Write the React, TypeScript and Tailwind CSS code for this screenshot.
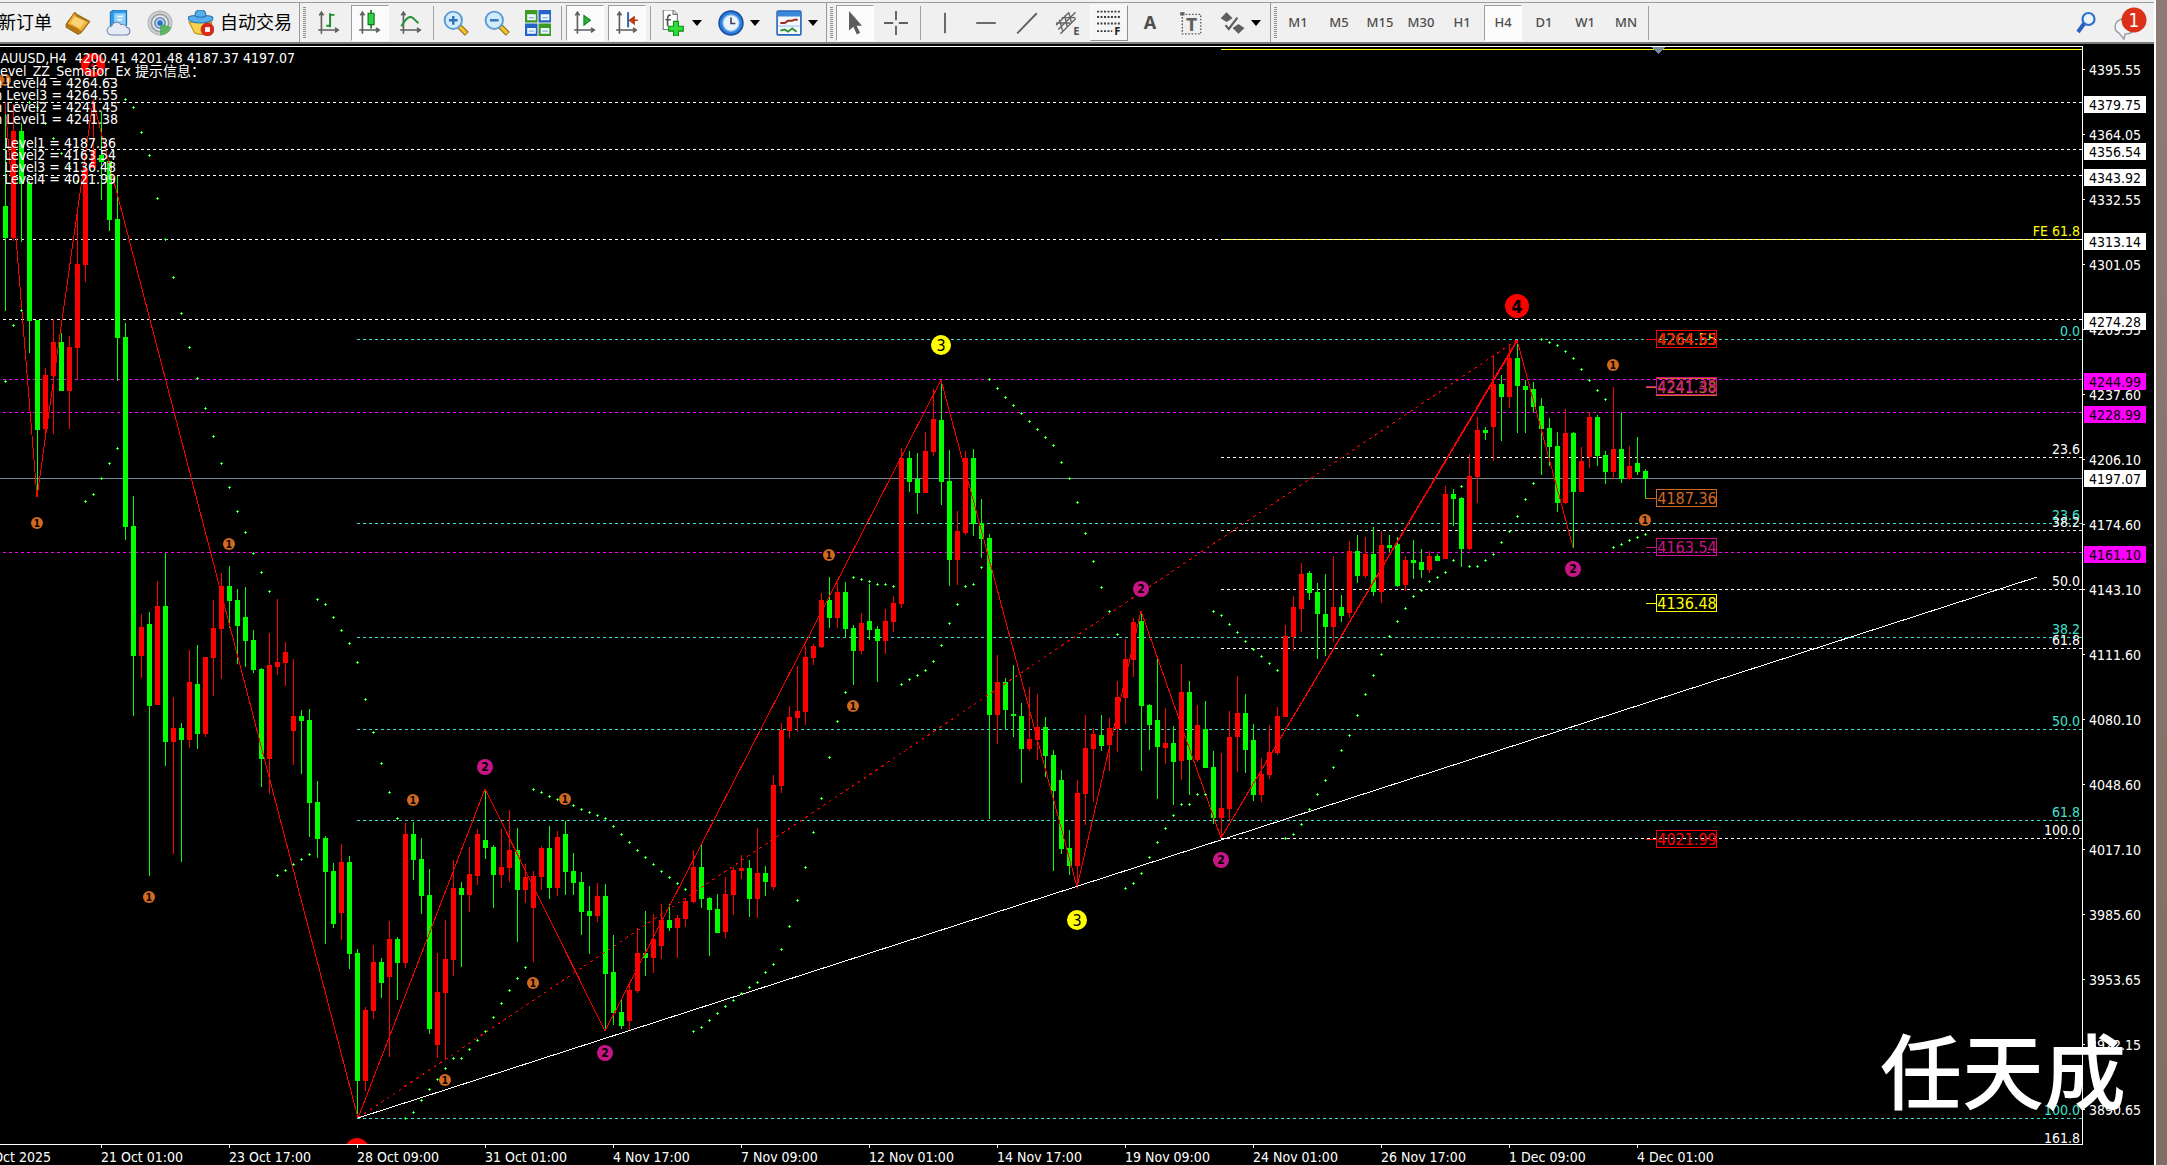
import { type ReactNode } from "react";

/* ------------------------------------------------------------------ */
/* Chart data                                                          */
/* ------------------------------------------------------------------ */

type Row = [number, number, number, number];

// Bars are stored in strips. Each strip has the index of its first bar, the
// window offset of its zero and the number of units per pixel. A row is
// [high, body top, body bottom, low]; "colors" has one letter for each row.
type Strip = { first: number; top: number; unit: number; colors: string; rows: Row[] };

const STRIPS: Strip[] = [
  {
    first: 0, top: 40, unit: 2.8, colors: "grgggrrgrrrrggggg",
    rows: [
      [190, 465, 554, 759], [180, 255, 554, 563], [232, 255, 403, 566], [395, 401, 787, 876],
      [783, 783, 1092, 1274], [917, 938, 1089, 1120], [782, 846, 941, 1104], [820, 846, 983, 983],
      [828, 860, 983, 1089], [475, 627, 862, 950], [357, 357, 630, 678], [165, 307, 357, 357],
      [200, 322, 342, 447], [338, 338, 504, 535], [380, 501, 834, 955], [792, 832, 1364, 1400],
      [1277, 1361, 1725, 1892],
    ],
  },
  {
    first: 17, top: 560, unit: 2.592, colors: "rgrgrgrgrrrgggggrrrrgggggrg",
    rows: [
      [140, 174, 249, 306], [135, 166, 378, 819], [54, 119, 376, 376], [-18, 119, 472, 534],
      [355, 435, 472, 762], [422, 435, 467, 783], [233, 316, 467, 487], [220, 321, 451, 490],
      [251, 251, 451, 459], [104, 176, 254, 352], [34, 67, 179, 308], [16, 67, 106, 176],
      [75, 104, 171, 270], [70, 148, 210, 277], [181, 207, 285, 293], [280, 282, 516, 588],
      [189, 272, 516, 606], [101, 264, 277, 298], [213, 238, 267, 327], [257, 404, 443, 531],
      [389, 404, 417, 555], [386, 415, 630, 718], [573, 627, 723, 772], [715, 721, 809, 995],
      [785, 806, 943, 954], [736, 783, 915, 985], [767, 783, 1021, 1060],
    ],
  },
  {
    first: 44, top: 700, unit: 3, colors: "grrgrgrgggrrrgrrggrrgrrrgrggggrgggrrgrrgrrrgggrrrgrgr",
    rows: [
      [747, 759, 1143, 1253], [921, 930, 1143, 1173], [735, 786, 933, 957], [774, 786, 849, 894],
      [663, 717, 831, 1071], [711, 717, 789, 900], [369, 402, 789, 804], [366, 402, 480, 540],
      [414, 477, 588, 642], [507, 585, 987, 1002], [759, 876, 1035, 1074], [660, 777, 879, 1077],
      [480, 564, 780, 828], [546, 564, 585, 801], [441, 522, 585, 636], [387, 402, 528, 555],
      [268, 420, 444, 477], [435, 441, 525, 624], [387, 501, 525, 564], [330, 450, 504, 546],
      [384, 450, 570, 726], [492, 531, 570, 609], [513, 528, 624, 786], [438, 444, 531, 570],
      [378, 444, 564, 597], [393, 411, 564, 588], [363, 402, 516, 585], [459, 513, 549, 585],
      [516, 546, 636, 705], [558, 633, 648, 762], [549, 588, 648, 666], [552, 588, 822, 993],
      [705, 816, 939, 975], [897, 936, 978, 987], [855, 870, 963, 990], [684, 759, 873, 879],
      [633, 759, 774, 828], [642, 717, 774, 819], [612, 660, 738, 777], [612, 660, 684, 693],
      [645, 654, 684, 774], [597, 603, 657, 681], [450, 501, 606, 609], [435, 501, 597, 624],
      [591, 594, 630, 768], [582, 627, 699, 699], [531, 582, 696, 714], [501, 510, 585, 645],
      [465, 504, 513, 537], [480, 504, 597, 651], [384, 519, 597, 654], [498, 519, 546, 588],
      [225, 255, 561, 570],
    ],
  },
  {
    first: 97, top: 330, unit: 2.6133, colors: "rrrrrrgrggrggrrrggrrggrrggg",
    rows: [
      [1027, 1045, 1192, 1210], [982, 1011, 1048, 1066], [878, 996, 1014, 1051], [826, 855, 998, 1032],
      [821, 826, 857, 876], [687, 706, 828, 831], [645, 706, 753, 779], [661, 685, 753, 779],
      [659, 685, 781, 803], [771, 779, 839, 928], [740, 766, 839, 847], [664, 760, 784, 810],
      [774, 781, 813, 920], [729, 760, 813, 847], [695, 713, 763, 789], [308, 335, 716, 727],
      [316, 335, 397, 423], [321, 389, 426, 481], [267, 316, 426, 426], [153, 233, 319, 329],
      [131, 235, 397, 457], [314, 395, 601, 669], [473, 525, 601, 666], [316, 335, 531, 536],
      [311, 335, 507, 538], [442, 505, 546, 596], [533, 544, 1006, 1278],
    ],
  },
  {
    first: 124, top: 360, unit: 2.6133, colors: "rgggrrggggrrrgrrrrgggrgrgrggrrrgg",
    rows: [
      [771, 841, 928, 1004], [831, 841, 915, 965], [797, 925, 930, 985], [896, 930, 1017, 1105],
      [855, 990, 1017, 1022], [873, 959, 993, 1045], [933, 959, 1035, 1090], [1019, 1032, 1126, 1335],
      [1071, 1098, 1278, 1291], [1228, 1275, 1322, 1346], [1098, 1132, 1322, 1382], [928, 1014, 1134, 1215],
      [962, 977, 1017, 1155], [928, 980, 1009, 1022], [936, 962, 1006, 1074], [839, 881, 964, 1024],
      [729, 781, 883, 951], [674, 685, 784, 828], [657, 682, 904, 1074], [899, 902, 954, 1019],
      [779, 941, 1011, 1147], [909, 1001, 1014, 1056], [956, 1001, 1051, 1163], [794, 868, 1048, 1098],
      [839, 868, 1045, 1137], [902, 954, 1045, 1050], [891, 964, 1066, 1066], [1022, 1064, 1197, 1213],
      [1027, 1171, 1197, 1250], [917, 985, 1173, 1202], [826, 923, 985, 1077], [873, 923, 1019, 1079],
      [951, 993, 1137, 1152],
    ],
  },
  {
    first: 157, top: 280, unit: 2.6133, colors: "rrrrrrgggrgrgrgrggrggrgrggrrgrgrggggggrgrrggrgrgg",
    rows: [
      [1249, 1291, 1346, 1364], [1163, 1233, 1294, 1304], [1116, 1139, 1236, 1241], [902, 930, 1142, 1142],
      [826, 855, 934, 970], [740, 768, 860, 920], [760, 766, 818, 836], [792, 815, 873, 990],
      [768, 873, 907, 983], [721, 855, 907, 946], [823, 855, 878, 894], [682, 708, 870, 883],
      [666, 708, 774, 792], [672, 716, 774, 779], [645, 716, 815, 826], [656, 693, 815, 844],
      [666, 693, 700, 711], [672, 690, 800, 802], [721, 732, 797, 813], [679, 732, 740, 781],
      [703, 737, 758, 779], [708, 721, 758, 766], [716, 721, 734, 734], [538, 559, 729, 729],
      [546, 559, 572, 643], [567, 570, 703, 750], [455, 512, 703, 706], [358, 392, 515, 583],
      [384, 392, 400, 418], [196, 272, 384, 473], [248, 272, 306, 421], [168, 204, 306, 335],
      [157, 204, 277, 400], [261, 277, 287, 400], [267, 285, 332, 345], [308, 329, 389, 510],
      [361, 387, 436, 486], [397, 434, 583, 606], [337, 400, 583, 585], [397, 400, 554, 700],
      [436, 473, 554, 554], [345, 358, 463, 491], [353, 358, 460, 486], [447, 457, 502, 533],
      [280, 442, 502, 520], [345, 442, 520, 531], [434, 486, 520, 523], [410, 478, 502, 510],
      [494, 499, 520, 572],
    ],
  },
];

// Parabolic SAR values, stored in strips in the same way.
const SAR: { first: number; top: number; unit: number; values: number[] }[] = [
  {
    first: 0, top: 40, unit: 2.8,
    values: [956, 799, 757, 176, 190, 234, 275, 317, 355, 395, 1292, 1272, 1228, 1186, 1143, 167, 189, 259, 324,
      443, 558, 664, 765, 861, 947, 1031, 1110, 1185, 1253, 1320, 1379, 1438, 1491, 1544],
  },
  {
    first: 34, top: 560, unit: 2.592,
    values: [818, 804, 789, 776, 763, 102, 115, 149, 182, 216, 265, 361],
  },
  {
    first: 46, top: 700, unit: 3,
    values: [97, 190, 277, 355, 1255, 1237, 1201, 1168, 1138, 1105, 1075, 1075, 1048, 1021, 994, 952, 910, 871,
      835, 802, 268, 277, 289, 298, 307, 316, 328, 337, 346, 355, 379, 403, 427, 451, 472, 493, 514, 532, 550,
      568, 994, 982, 961, 940, 919, 901, 880, 862, 847, 817, 793, 747],
  },
  {
    first: 98, top: 330, unit: 2.6133,
    values: [1559, 1491, 1404, 1313, 1224, 1117, 1023, 947, 646, 651, 657, 664, 664, 670, 926, 913, 902, 889, 866,
      824, 767, 717, 670, 664, 620, 129, 153, 176, 197, 218, 239, 260, 281, 302],
  },
  {
    first: 132, top: 360, unit: 2.6133,
    values: [268, 310, 372, 453, 526, 594, 657, 717, 1380, 1367, 1341, 1300, 1261, 1224, 1190, 1161, 1161, 1135,
      1135, 657, 667, 691, 711, 735, 756, 774, 793, 811],
  },
  {
    first: 160, top: 280, unit: 2.6133,
    values: [1459, 1448, 1422, 1383, 1344, 1308, 1274, 1229, 1190, 1137, 1083, 1033, 978, 932, 892, 858, 827, 811,
      787, 777, 764, 733, 540, 748, 748, 733, 717, 686, 657, 618, 573, 532, 155, 163, 171, 187, 205, 234, 263,
      288, 312, 698, 691, 681, 673, 665],
  },
];

const barX = (index: number) => 5 + 8 * index;

const candles = STRIPS.flatMap(({ first, top, unit, colors, rows }) =>
  rows.map((row, i) => {
    const [high, open, close, low] = row.map((v) => Math.round(top + v / unit));
    return { x: barX(first + i), high, open, close, low, fill: colors[i] === "r" ? "#ff0000" : "#00ff00" };
  }),
);

const sarDots = SAR.flatMap(({ first, top, unit, values }) =>
  values.map((v, i) => ({ x: barX(first + i), y: Math.floor(top + v / unit) })),
);

const WHITE = "#ffffff";
const TEAL = "#40e0d0";
const MAGENTA = "#ff00ff";

const LEVELS: { y: number; x: number; color: string; label?: string }[] = [
  { y: 102, x: 3, color: WHITE },
  { y: 149, x: 3, color: WHITE },
  { y: 175, x: 3, color: WHITE },
  { y: 239, x: 3, color: WHITE },
  { y: 319, x: 3, color: WHITE },
  { y: 339, x: 357, color: TEAL, label: "0.0" },
  { y: 379, x: 3, color: MAGENTA },
  { y: 412, x: 3, color: MAGENTA },
  { y: 457, x: 1221, color: WHITE, label: "23.6" },
  { y: 523, x: 357, color: TEAL, label: "23.6" },
  { y: 530, x: 1221, color: WHITE, label: "38.2" },
  { y: 552, x: 3, color: MAGENTA },
  { y: 589, x: 1221, color: WHITE, label: "50.0" },
  { y: 637, x: 357, color: TEAL, label: "38.2" },
  { y: 648, x: 1221, color: WHITE, label: "61.8" },
  { y: 729, x: 357, color: TEAL, label: "50.0" },
  { y: 820, x: 357, color: TEAL, label: "61.8" },
  { y: 838, x: 1221, color: WHITE, label: "100.0" },
  { y: 1118, x: 357, color: TEAL, label: "100.0" },
  { y: 1146, x: 1221, color: WHITE, label: "161.8" },
];

const MARKERS: { n: 1 | 2 | 3 | 4; x: number; y: number }[] = [
  { n: 1, x: 5, y: 80 }, { n: 1, x: 37, y: 523 }, { n: 1, x: 229, y: 544 }, { n: 1, x: 149, y: 897 },
  { n: 1, x: 413, y: 800 }, { n: 1, x: 565, y: 799 }, { n: 1, x: 533, y: 983 }, { n: 1, x: 445, y: 1080 },
  { n: 1, x: 829, y: 555 }, { n: 1, x: 853, y: 706 }, { n: 1, x: 1613, y: 365 }, { n: 1, x: 1645, y: 520 },
  { n: 2, x: 485, y: 767 }, { n: 2, x: 605, y: 1053 }, { n: 2, x: 1141, y: 589 }, { n: 2, x: 1221, y: 860 },
  { n: 2, x: 1573, y: 569 }, { n: 3, x: 941, y: 345 }, { n: 3, x: 1077, y: 920 }, { n: 4, x: 93, y: 65 },
  { n: 4, x: 357, y: 1150 }, { n: 4, x: 1517, y: 306 },
];

const MARKER_STYLE = {
  1: { r: 6, fill: "#d2691e", size: 10, weight: 700 },
  2: { r: 8, fill: "#c71585", size: 12, weight: 700 },
  3: { r: 10, fill: "#ffff00", size: 16, weight: 400 },
  4: { r: 12, fill: "#ff0000", size: 18, weight: 700 },
};

const PRICE_BOXES: { y: number; color: string; text: string }[] = [
  { y: 339, color: "#ffff00", text: "4264.55" },
  { y: 339, color: "#ff0000", text: "4264.63" },
  { y: 387, color: "#d2691e", text: "4241.38" },
  { y: 386, color: "#c71585", text: "4241.45" },
  { y: 498, color: "#d2691e", text: "4187.36" },
  { y: 547, color: "#c71585", text: "4163.54" },
  { y: 603, color: "#ffff00", text: "4136.48" },
  { y: 839, color: "#ff0000", text: "4021.99" },
];

const INFO_LINES: { y: number; end: number; text: string }[] = [
  { y: 63, end: 295, text: "XAUUSD,H4  4200.41 4201.48 4187.37 4197.07" },
  { y: 76, end: 205, text: "3_Level_ZZ_Semafor_Ex 提示信息：" },
  { y: 88, end: 118, text: "High Level4 = 4264.63" },
  { y: 100, end: 118, text: "High Level3 = 4264.55" },
  { y: 112, end: 118, text: "High Level2 = 4241.45" },
  { y: 124, end: 118, text: "High Level1 = 4241.38" },
  { y: 148, end: 116, text: "Low Level1 = 4187.36" },
  { y: 160, end: 116, text: "Low Level2 = 4163.54" },
  { y: 172, end: 116, text: "Low Level3 = 4136.48" },
  { y: 184, end: 116, text: "Low Level4 = 4021.99" },
];

const ZIGZAG = "5,102 37,497 93,101 358,1118 485,789 605,1031 941,380 1077,887 1141,611 1221,838 1517,340 1573,547";

const AXIS_PRICES = [
  "4395.55", "4364.05", "4332.55", "4301.05", "4269.55", "4237.60", "4206.10", "4174.60", "4143.10",
  "4111.60", "4080.10", "4048.60", "4017.10", "3985.60", "3953.65", "3922.15", "3890.65",
];

const PRICE_TAGS: { top: string; tone: string; text: string }[] = [
  { top: "top-[50px]", tone: "bg-white", text: "4379.75" },
  { top: "top-[97px]", tone: "bg-white", text: "4356.54" },
  { top: "top-[123px]", tone: "bg-white", text: "4343.92" },
  { top: "top-[187px]", tone: "bg-white", text: "4313.14" },
  { top: "top-[267px]", tone: "bg-white", text: "4274.28" },
  { top: "top-[327px]", tone: "bg-[#ff00ff]", text: "4244.99" },
  { top: "top-[360px]", tone: "bg-[#ff00ff]", text: "4228.99" },
  { top: "top-[424px]", tone: "bg-white", text: "4197.07" },
  { top: "top-[500px]", tone: "bg-[#ff00ff]", text: "4161.10" },
];

const TIMES = [
  "21 Oct 01:00", "23 Oct 17:00", "28 Oct 09:00", "31 Oct 01:00", "4 Nov 17:00", "7 Nov 09:00", "12 Nov 01:00",
  "14 Nov 17:00", "19 Nov 09:00", "24 Nov 01:00", "26 Nov 17:00", "1 Dec 09:00", "4 Dec 01:00",
];

/* ------------------------------------------------------------------ */
/* Plot                                                                */
/* ------------------------------------------------------------------ */

function Plot() {
  return (
    <svg className="block h-[1097px] w-full overflow-hidden" fontSize="14" role="img" aria-label="XAUUSD H4">
      {/* y values below count from the top of the window */}
      <g transform="translate(0 -47)">
        <g shapeRendering="crispEdges">
          <line x1="1221" x2="100%" y1="49.5" y2="49.5" stroke="#ffff00" />
          <line x1="1221" x2="100%" y1="239.5" y2="239.5" stroke="#ffff00" />
          {LEVELS.map((l) => (
            <line key={`${l.y}`} x1={l.x} x2="100%" y1={l.y + 0.5} y2={l.y + 0.5} stroke={l.color} strokeDasharray="3 3" />
          ))}
          <line x1="0" x2="100%" y1="478.5" y2="478.5" stroke="#778899" />
          {candles.map((c) => (
            <g key={c.x} fill={c.fill}>
              <rect x={c.x} y={c.high} width="1" height={Math.max(1, c.low - c.high)} />
              <rect x={c.x - 2} y={c.open} width="5" height={Math.max(2, c.close - c.open)} />
            </g>
          ))}
          <g fill="none" stroke="#ff0000">
            <polyline points={ZIGZAG} />
            <line x1="1221" y1="838" x2="1518" y2="340" />
            <line x1="358" y1="1118" x2="1517" y2="340" strokeDasharray="3 4" />
          </g>
          <line x1="358" y1="1118" x2="2037" y2="577" stroke="#ffffff" />
          {sarDots.map((d) => (
            <g key={d.x}>
              <path d={`M${d.x - 1} ${d.y}h3v1h-3zM${d.x} ${d.y - 1}h1v3h-1z`} fill="#00ff00" />
              <rect x={d.x} y={d.y} width="1" height="1" fill="#c8ffc8" />
            </g>
          ))}
          <path d="M1651 47h14l-7 7z" fill="#778899" />
        </g>

        <text x="100%" y="236" dx="-2" textAnchor="end" fill="#ffff00">FE 61.8</text>
        {LEVELS.filter((l) => l.label).map((l) => (
          <text key={`${l.y}`} x="100%" y={l.y - 3} dx="-2" textAnchor="end" fill={l.color}>
            {l.label}
          </text>
        ))}

        {MARKERS.map((m) => {
          const s = MARKER_STYLE[m.n];
          return (
            <g key={`${m.x}-${m.y}`}>
              <circle cx={m.x} cy={m.y} r={s.r} fill={s.fill} />
              <text x={m.x} y={m.y} textAnchor="middle" dominantBaseline="central" fontSize={s.size} fontWeight={s.weight} fill="#000000">
                {m.n}
              </text>
            </g>
          );
        })}

        {INFO_LINES.map((t) => (
          <text key={t.y} x={t.end} y={t.y} textAnchor="end" fill="#ffffff" className="whitespace-pre">
            {t.text}
          </text>
        ))}

        {PRICE_BOXES.map((b) => (
          <g key={b.text}>
            <g shapeRendering="crispEdges" stroke={b.color} fill="none">
              <line x1="1646" x2="1656" y1={b.y + 0.5} y2={b.y + 0.5} />
              <rect x="1656.5" y={b.y - 8.5} width="60" height="17" />
            </g>
            <text x="1687" y={b.y + 6} textAnchor="middle" fontSize="16" fill={b.color}>
              {b.text}
            </text>
          </g>
        ))}
      </g>
    </svg>
  );
}

function PriceAxis() {
  return (
    <div className="relative w-[71px] shrink-0 pt-[16px] text-sm leading-4 text-white">
      <ul>
        {AXIS_PRICES.map((p) => (
          <li key={p} className="flex h-[65px] items-start">
            <span className="mt-[7px] h-px w-[2px] bg-white" />
            <span className="pl-1">{p}</span>
          </li>
        ))}
      </ul>
      {PRICE_TAGS.map((t) => (
        <div key={t.text} className={`absolute left-px flex h-[17px] w-[62px] items-center pl-[5px] text-black ${t.top} ${t.tone}`}>
          {t.text}
        </div>
      ))}
    </div>
  );
}

function TimeAxis() {
  return (
    <div className="flex h-5 overflow-hidden text-sm leading-4 text-white">
      <div className="flex w-[101px] shrink-0">
        <span className="flex w-[51px] shrink-0 justify-end pt-[4px] whitespace-nowrap">16 Oct 2025</span>
      </div>
      {TIMES.map((t) => (
        <div key={t} className="w-[128px] shrink-0 whitespace-nowrap">
          <span className="block h-[3px] w-px bg-white" />
          <span className="block pt-px">{t}</span>
        </div>
      ))}
    </div>
  );
}

/* ------------------------------------------------------------------ */
/* Toolbar                                                             */
/* ------------------------------------------------------------------ */

const AXES = (
  <path d="M5 2v20M2 18.500h18M3 5 5 2l2 3M17.500 16.500l3 2-3 2" fill="none" stroke="#5f5f5f" strokeWidth="1.500" />
);

function Svg({ children }: { children: ReactNode }) {
  return (
    <svg width="26" height="26" viewBox="0 0 24 24" aria-hidden="true">
      {children}
    </svg>
  );
}

const ICONS = {
  book: (
    <Svg>
      <path d="M1 13 9 2l2 2 12 6.500L15 21l-3 1.500L1 16z" fill="#b97a10" stroke="#8a5a0c" strokeWidth=".8" />
      <path d="M9 2c0 2.500 1 3.500 3 4.500l10 4.500-7 9C12 17.500 7 15 2 13z" fill="#eeb640" stroke="#a86d10" strokeWidth=".8" />
      <path d="M5 12 9.500 6l9 4.500-5 6z" fill="#fbdc82" opacity=".8" />
    </Svg>
  ),
  cloud: (
    <Svg>
      <path d="M4 2 7 0h12v14H4z" fill="#2f9be8" stroke="#1b72bd" />
      <path d="M7.500 3H18v11H7.500z" fill="#8fd2fb" />
      <path d="M10.500 6h5M10.500 9h4" stroke="#fff" strokeWidth="1.500" />
      <path d="M5 23a4 4 0 0 1 0-8 5 5 0 0 1 9-1.500 4 4 0 0 1 5 2.500 3.600 3.600 0 0 1 .5 7z" fill="#e4ebf5" stroke="#6f86ab" />
    </Svg>
  ),
  radar: (
    <Svg>
      <circle cx="12" cy="12" r="11" fill="#cfd2d5" stroke="#b0b4b8" />
      <circle cx="12" cy="12" r="8" fill="#e6e8ea" stroke="#9aa0a7" strokeWidth="1.500" />
      <circle cx="12" cy="12" r="4.800" fill="#c6d6e8" stroke="#6f8db3" strokeWidth="1.500" />
      <path d="M12 12v11.500A11.500 11.500 0 0 0 22.500 16z" fill="#3fae45" opacity=".75" />
      <circle cx="12" cy="12" r="2.500" fill="#2d6fd0" />
    </Svg>
  ),
  auto: (
    <Svg>
      <path d="M1 11h21l-4 10c-2 2-9 2-12 0z" fill="#f7d24a" stroke="#b58a17" />
      <path d="M0 7.500C0 5.500 5 5 6.500 5c0-3 2-5 5-5s5 2 5 5C18 5 23 5.500 23 7.500 23 10.500 17 12 11.500 12S0 10.500 0 7.500z" fill="#58aee8" stroke="#2573b3" />
      <path d="M6.500 5.500c2 1.500 8 1.500 10 0" stroke="#2573b3" fill="none" />
      <circle cx="18" cy="18" r="6" fill="#dd2a1b" stroke="#a81a0f" strokeWidth=".6" />
      <path d="M15.800 15.800h4.400v4.400h-4.400z" fill="#fff" />
    </Svg>
  ),
  bars: (
    <Svg>
      {AXES}
      <path d="M13 3v13M13 4.500h4M9.500 14.500H13" stroke="#1d8f2a" strokeWidth="1.800" fill="none" />
    </Svg>
  ),
  candle: (
    <Svg>
      {AXES}
      <path d="M13 0v17" stroke="#13741d" strokeWidth="1.500" />
      <path d="M10.200 3h5.600v10.500h-5.600z" fill="#2fd04a" stroke="#13741d" />
    </Svg>
  ),
  line: (
    <Svg>
      {AXES}
      <path d="M3 15C7 9 9 6 12 6.500S16 11 19 12" stroke="#2c8f36" strokeWidth="1.800" fill="none" />
    </Svg>
  ),
  zoomIn: (
    <Svg>
      <path d="m15 15 7 7" stroke="#8f6a10" strokeWidth="5" />
      <path d="m15 15 6.500 6.500" stroke="#f2c52f" strokeWidth="3" />
      <circle cx="9.500" cy="9.500" r="8" fill="#d3ecfb" stroke="#5a9bd8" strokeWidth="1.800" />
      <path d="M5.500 9.500h8M9.500 5.500v8" stroke="#3272bd" strokeWidth="2.200" />
    </Svg>
  ),
  zoomOut: (
    <Svg>
      <path d="m15 15 7 7" stroke="#8f6a10" strokeWidth="5" />
      <path d="m15 15 6.500 6.500" stroke="#f2c52f" strokeWidth="3" />
      <circle cx="9.500" cy="9.500" r="8" fill="#d3ecfb" stroke="#5a9bd8" strokeWidth="1.800" />
      <path d="M5.500 9.500h8" stroke="#3272bd" strokeWidth="2.200" />
    </Svg>
  ),
  tile: (
    <Svg>
      <path d="M0 0h11.500v11.500H0zM12.500 12.500H24V24H12.500z" fill="#3d9a22" />
      <path d="M12.500 0H24v11.500H12.500zM0 12.500h11.500V24H0z" fill="#2562c9" />
      <path d="M2 4h8v5.500H2zM14.500 4h8v5.500h-8zM2 16.500h8V22H2zM14.500 16.500h8V22h-8z" fill="#eef6ff" />
      <path d="M3.500 7h5M16 7h5M3.500 19.500h5M16 19.500h5" stroke="#8bb4d8" />
    </Svg>
  ),
  scroll: (
    <Svg>
      {AXES}
      <path d="m11 5 6 4.500L11 14z" fill="#24b53a" stroke="#14801f" />
    </Svg>
  ),
  shift: (
    <Svg>
      {AXES}
      <path d="M13 2v14" stroke="#2264b5" strokeWidth="1.800" />
      <path d="M22 9.500h-5M18.500 6.500l-4 3 4 3z" stroke="#b8390e" strokeWidth="1.500" fill="#d8501b" />
    </Svg>
  ),
  indicator: (
    <Svg>
      <path d="M3 0h9l4 4v14H3z" fill="#fff" stroke="#777" />
      <path d="M12 0v4h4" fill="#ddd" stroke="#777" />
      <path d="M10 5c-3-1-3 2-3 4v6M5 9h5" stroke="#555" strokeWidth="1.500" fill="none" />
      <path d="M12.500 10.500H17V15h4.500v4.500H17V24h-4.500v-4.500H8V15h4.500z" fill="#30e038" stroke="#118a1a" />
    </Svg>
  ),
  clock: (
    <Svg>
      <circle cx="12" cy="12" r="11" fill="#2f7fdc" stroke="#17509f" strokeWidth="1.500" />
      <circle cx="12" cy="12" r="7.500" fill="#e9f4fd" stroke="#8fc0ee" />
      <path d="M12 7v5.500h4" stroke="#444" strokeWidth="1.500" fill="none" />
    </Svg>
  ),
  template: (
    <Svg>
      <rect x="1" y="1" width="22" height="22" rx="1" fill="#f4f9ff" stroke="#2467b8" strokeWidth="1.500" />
      <path d="M1.500 1.500h21V6h-21z" fill="#3b87dc" />
      <path d="M4 12h4l3-2h4l2-1h3" stroke="#a32a15" strokeWidth="1.800" fill="none" />
      <path d="m4 19 4-1 3 2 4-3 4 3" stroke="#2f9331" strokeWidth="1.800" fill="none" />
      <path d="M2 14.800h20" stroke="#9fc3ea" />
    </Svg>
  ),
  cursor: (
    <Svg>
      <path d="M6.500 1v18l4-3.500 3.200 7 3-1.500-3.200-6.500h5z" fill="#5b5b5b" />
    </Svg>
  ),
  cross: (
    <Svg>
      <path d="M12 1v8.500M12 14.500V23M1 12h8.500M14.500 12H23" stroke="#5f5f5f" strokeWidth="1.700" />
    </Svg>
  ),
  vline: (
    <Svg>
      <path d="M12 2.500v19" stroke="#5f5f5f" strokeWidth="1.700" />
    </Svg>
  ),
  hline: (
    <Svg>
      <path d="M3 12h18" stroke="#5f5f5f" strokeWidth="1.700" />
    </Svg>
  ),
  trend: (
    <Svg>
      <path d="M3 21.500 21 3" stroke="#5f5f5f" strokeWidth="1.700" />
    </Svg>
  ),
  channel: (
    <Svg>
      <path d="M1 14 13 2M3 18 19 2M5 22 19 8M4 9l3 10M9 5l2 10M13 3l2 8M1 12h13M6 7h13" stroke="#666" strokeWidth="1.300" fill="none" />
      <text x="17" y="23" fontSize="9" fontWeight="700" fill="#555">E</text>
    </Svg>
  ),
  fibo: (
    <Svg>
      <path d="M1 1.500h21M1 6.500h21M1 12.500h21M1 19.500h14" stroke="#3a3a3a" strokeWidth="1.800" strokeDasharray="1.800 1.400" />
      <text x="17" y="23" fontSize="9" fontWeight="700" fill="#222">F</text>
    </Svg>
  ),
  label: (
    <Svg>
      <rect x="4" y="4" width="17" height="18" fill="none" stroke="#5f5f5f" strokeWidth="1.300" strokeDasharray="1.500 1.500" />
      <path d="M2 2h4v3H2z" fill="#5f5f5f" />
      <text x="12.500" y="19" fontSize="16" fontWeight="700" textAnchor="middle" fill="#5f5f5f">T</text>
    </Svg>
  ),
  shapes: (
    <Svg>
      <path d="M7 2l5.500 5.500L7 11 1.500 7.500zM18 22l-5.500-5.500L18 13l5.500 3.500z" fill="#5f5f5f" />
      <path d="m6 14 3 3.500L17 7" fill="none" stroke="#5f5f5f" strokeWidth="2" />
    </Svg>
  ),
};

const DARK_TEXT = "text-[#4d4d4d]";

function Tool({ name, children, pressed, raised }: { name: string; children: ReactNode; pressed?: boolean; raised?: boolean }) {
  const look = pressed
    ? "border-[#9d9d9d] border-r-white border-b-white bg-[#fbfbfb]"
    : raised
      ? "border-white border-r-[#8f8f8f] border-b-[#8f8f8f] bg-[#f6f6f6]"
      : "border-transparent";
  return (
    <button type="button" aria-label={name} aria-pressed={pressed} className={`flex h-[36px] w-[38px] shrink-0 items-center justify-center border ${look}`}>
      {children}
    </button>
  );
}

function MenuTool({ name, children }: { name: string; children: ReactNode }) {
  return (
    <button type="button" aria-label={name} aria-haspopup="menu" className="flex h-[36px] shrink-0 items-center">
      <span className="flex w-[38px] justify-center">{children}</span>
      <span className="h-0 w-0 border-x-5 border-t-6 border-x-transparent border-t-black" />
    </button>
  );
}

const Divider = () => <span className="block h-[34px] w-px shrink-0 bg-[#a0a0a0]" />;

const Grip = () => (
  <span className="flex h-full shrink-0 items-center gap-[3px]">
    <span className="h-full w-px bg-[#9a9a9a]" />
    <span className="h-[32px] w-[3px] bg-[repeating-linear-gradient(to_bottom,#8f8f8f_0,#8f8f8f_1px,transparent_1px,transparent_2px)]" />
  </span>
);

const TIMEFRAMES = ["M1", "M5", "M15", "M30", "H1", "H4", "D1", "W1", "MN"];

function Toolbar() {
  return (
    <header className="border-b-2 border-[#7b7b7b] bg-[#f0f0f0]">
      <div className="h-[2px]" />
      <div className="flex h-[40px] items-center overflow-hidden border-t border-[#9c9c9c]">
        <div className="flex shrink-0 items-center gap-[3px]">
          <button type="button" className="-ml-0.5 w-[58px] text-left text-[18px] whitespace-nowrap text-black">新订单</button>
          <Tool name="市场报价">{ICONS.book}</Tool>
          <Tool name="云">{ICONS.cloud}</Tool>
          <Tool name="信号">{ICONS.radar}</Tool>
          <button type="button" className="flex h-[36px] w-[117px] items-center gap-[6px] pl-[6px] text-[18px] whitespace-nowrap text-black">
            {ICONS.auto}自动交易
          </button>
        </div>
        <Grip />
        <div className="flex shrink-0 items-center gap-[3px] pl-[4px]">
          <Tool name="柱状图">{ICONS.bars}</Tool>
          <Tool name="蜡烛图" pressed>{ICONS.candle}</Tool>
          <Tool name="折线图">{ICONS.line}</Tool>
          <Divider />
          <Tool name="放大">{ICONS.zoomIn}</Tool>
          <Tool name="缩小">{ICONS.zoomOut}</Tool>
          <Tool name="平铺窗口">{ICONS.tile}</Tool>
        </div>
        <div className="flex shrink-0 items-center gap-[4px] pl-[4px]">
          <Divider />
          <Tool name="自动滚动" pressed>{ICONS.scroll}</Tool>
          <Tool name="图表平移" pressed>{ICONS.shift}</Tool>
          <Divider />
        </div>
        <div className="flex shrink-0 items-center gap-[10px] pr-[8px] pl-[3px]">
          <MenuTool name="指标">{ICONS.indicator}</MenuTool>
          <MenuTool name="时间周期">{ICONS.clock}</MenuTool>
          <MenuTool name="模板">{ICONS.template}</MenuTool>
        </div>
        <Grip />
        <div className="flex shrink-0 items-center gap-[3px] pr-[9px] pl-[3px]">
          <Tool name="光标" pressed>{ICONS.cursor}</Tool>
          <Tool name="十字准线">{ICONS.cross}</Tool>
          <span className="px-[2px]"><Divider /></span>
          <Tool name="垂直线">{ICONS.vline}</Tool>
          <Tool name="水平线">{ICONS.hline}</Tool>
          <Tool name="趋势线">{ICONS.trend}</Tool>
          <Tool name="等距通道">{ICONS.channel}</Tool>
          <Tool name="斐波那契" raised>{ICONS.fibo}</Tool>
          <Tool name="文本">
            <span className={`text-[18px] font-bold ${DARK_TEXT} [font-family:'Noto_Sans',sans-serif]`}>A</span>
          </Tool>
          <Tool name="文本标签">{ICONS.label}</Tool>
          <MenuTool name="图形">{ICONS.shapes}</MenuTool>
        </div>
        <Grip />
        <div className="flex shrink-0 items-center gap-[3px] pl-[2px] [font-family:'Noto_Sans',sans-serif]">
          {TIMEFRAMES.map((t) => (
            <Tool key={t} name={t} pressed={t === "H4"}>
              <span className={`text-[13px] font-medium ${DARK_TEXT}`}>{t}</span>
            </Tool>
          ))}
          <Divider />
        </div>
        <div className="ml-auto flex shrink-0 items-center gap-[14px] pr-[6px]">
          <button type="button" aria-label="搜索" className="h-[24px] w-[24px]">
            <svg width="24" height="24" viewBox="0 0 24 24" aria-hidden="true">
              <path d="M10.500 12 4 21" stroke="#2a5fc4" strokeWidth="4" />
              <circle cx="14.500" cy="8" r="6" fill="#eaf4fd" stroke="#2f6fc6" strokeWidth="2.200" />
            </svg>
          </button>
          <button type="button" aria-label="消息" className="flex h-[36px] w-[36px] items-center">
            <svg width="36" height="36" viewBox="0 0 36 36" aria-hidden="true">
              <path d="M3 22c0-5 4-8 9-8s10 3 10 8-4 7-9 7l-1 5-5-6c-2-1-4-3-4-6z" fill="#f4f5f7" stroke="#9aa0a6" strokeWidth="1.500" />
              <circle cx="22" cy="15" r="12.500" fill="#dd3019" />
              <text x="22" y="21.500" fontSize="19" textAnchor="middle" fill="#fff">1</text>
            </svg>
          </button>
        </div>
      </div>
    </header>
  );
}

/* ------------------------------------------------------------------ */
/* Window                                                              */
/* ------------------------------------------------------------------ */

export default function App() {
  return (
    <div className="flex min-h-screen overflow-hidden bg-[#84726a] [font-family:'DejaVu_Sans_Condensed','Noto_Sans','Noto_Sans_CJK_SC',sans-serif]">
      <div className="flex min-w-0 flex-1 flex-col border-r-2 border-white bg-black">
        <Toolbar />
        <main className="relative flex pt-[2px]">
          <div className="min-w-0 flex-1">
            <div className="border border-l-0 border-white">
              <Plot />
            </div>
            <TimeAxis />
          </div>
          <PriceAxis />
          <p className="absolute right-[28px] bottom-[58px] text-[82px] leading-[82px] font-medium text-white [font-family:'Noto_Sans_CJK_SC',sans-serif]">
            任天成
          </p>
        </main>
      </div>
      <div className="w-[11px] shrink-0 bg-linear-to-b from-[#8d7b75] to-[#7f6e63]" />
    </div>
  );
}
